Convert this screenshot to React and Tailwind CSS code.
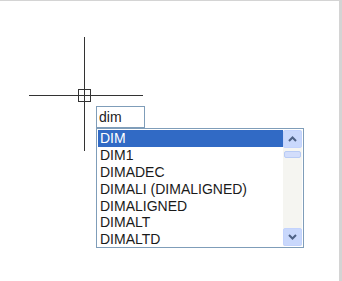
const ITEMS = ['DIM', 'DIM1', 'DIMADEC', 'DIMALI (DIMALIGNED)', 'DIMALIGNED', 'DIMALT', 'DIMALTD'];

function Crosshair() {
  return (
    <svg className="absolute left-0 top-0" width="160" height="160" viewBox="0 0 160 160">
      <g stroke="#333" strokeWidth="1.6" fill="none" shapeRendering="crispEdges">
        <line x1="84.5" y1="36" x2="84.5" y2="150" />
        <line x1="29" y1="94.5" x2="143" y2="94.5" />
        <rect x="78.5" y="88.5" width="12" height="12" strokeWidth="1.4" />
      </g>
    </svg>
  );
}

function ScrollBar() {
  return (
    <div className="flex w-[19px] flex-col bg-[#f5f5f1]">
      <div className="flex h-[18px] items-center justify-center rounded-[2px] border border-[#c3d3fd] bg-[#c9d8fc]">
        <svg width="9" height="6" viewBox="0 0 9 6">
          <path d="M1 5 L4.5 1.5 L8 5" stroke="#4d6185" strokeWidth="2" fill="none" />
        </svg>
      </div>
      <div className="mx-[1px] mt-[3px] h-[7px] rounded-[2px] border border-[#b8cbf5] bg-[#d2ddfb]" />
      <div className="flex-1" />
      <div className="flex h-[18px] items-center justify-center rounded-[2px] border border-[#c3d3fd] bg-[#c9d8fc]">
        <svg width="9" height="6" viewBox="0 0 9 6">
          <path d="M1 1 L4.5 4.5 L8 1" stroke="#4d6185" strokeWidth="2" fill="none" />
        </svg>
      </div>
    </div>
  );
}

export default function App() {
  return (
    <div className="relative h-[281px] w-[342px] overflow-hidden border-t border-r-[3px] border-[#d4d4d4] bg-white font-['Liberation_Sans',sans-serif]">
      <Crosshair />

      <div className="relative pl-[96px] pt-[105px]">
        {/* command input */}
        <div className="flex h-[22px] w-[49px] items-center border border-[#7f9db9] bg-white pl-[2px] text-[14px] leading-none text-[#222]">
          dim
        </div>

        {/* autocomplete list */}
        <div className="flex h-[120px] w-[208px] border border-[#7f9db9] bg-white p-[1px]">
          <ul className="flex-1 text-[14px] leading-none text-[#1a1a1a]">
            {ITEMS.map((item, i) => (
              <li
                key={item}
                className={`flex h-[16.8px] items-center pl-[2px] ${i === 0 ? 'bg-[#316ac5] text-white' : ''}`}
              >
                {item}
              </li>
            ))}
          </ul>
          <ScrollBar />
        </div>
      </div>
    </div>
  );
}
